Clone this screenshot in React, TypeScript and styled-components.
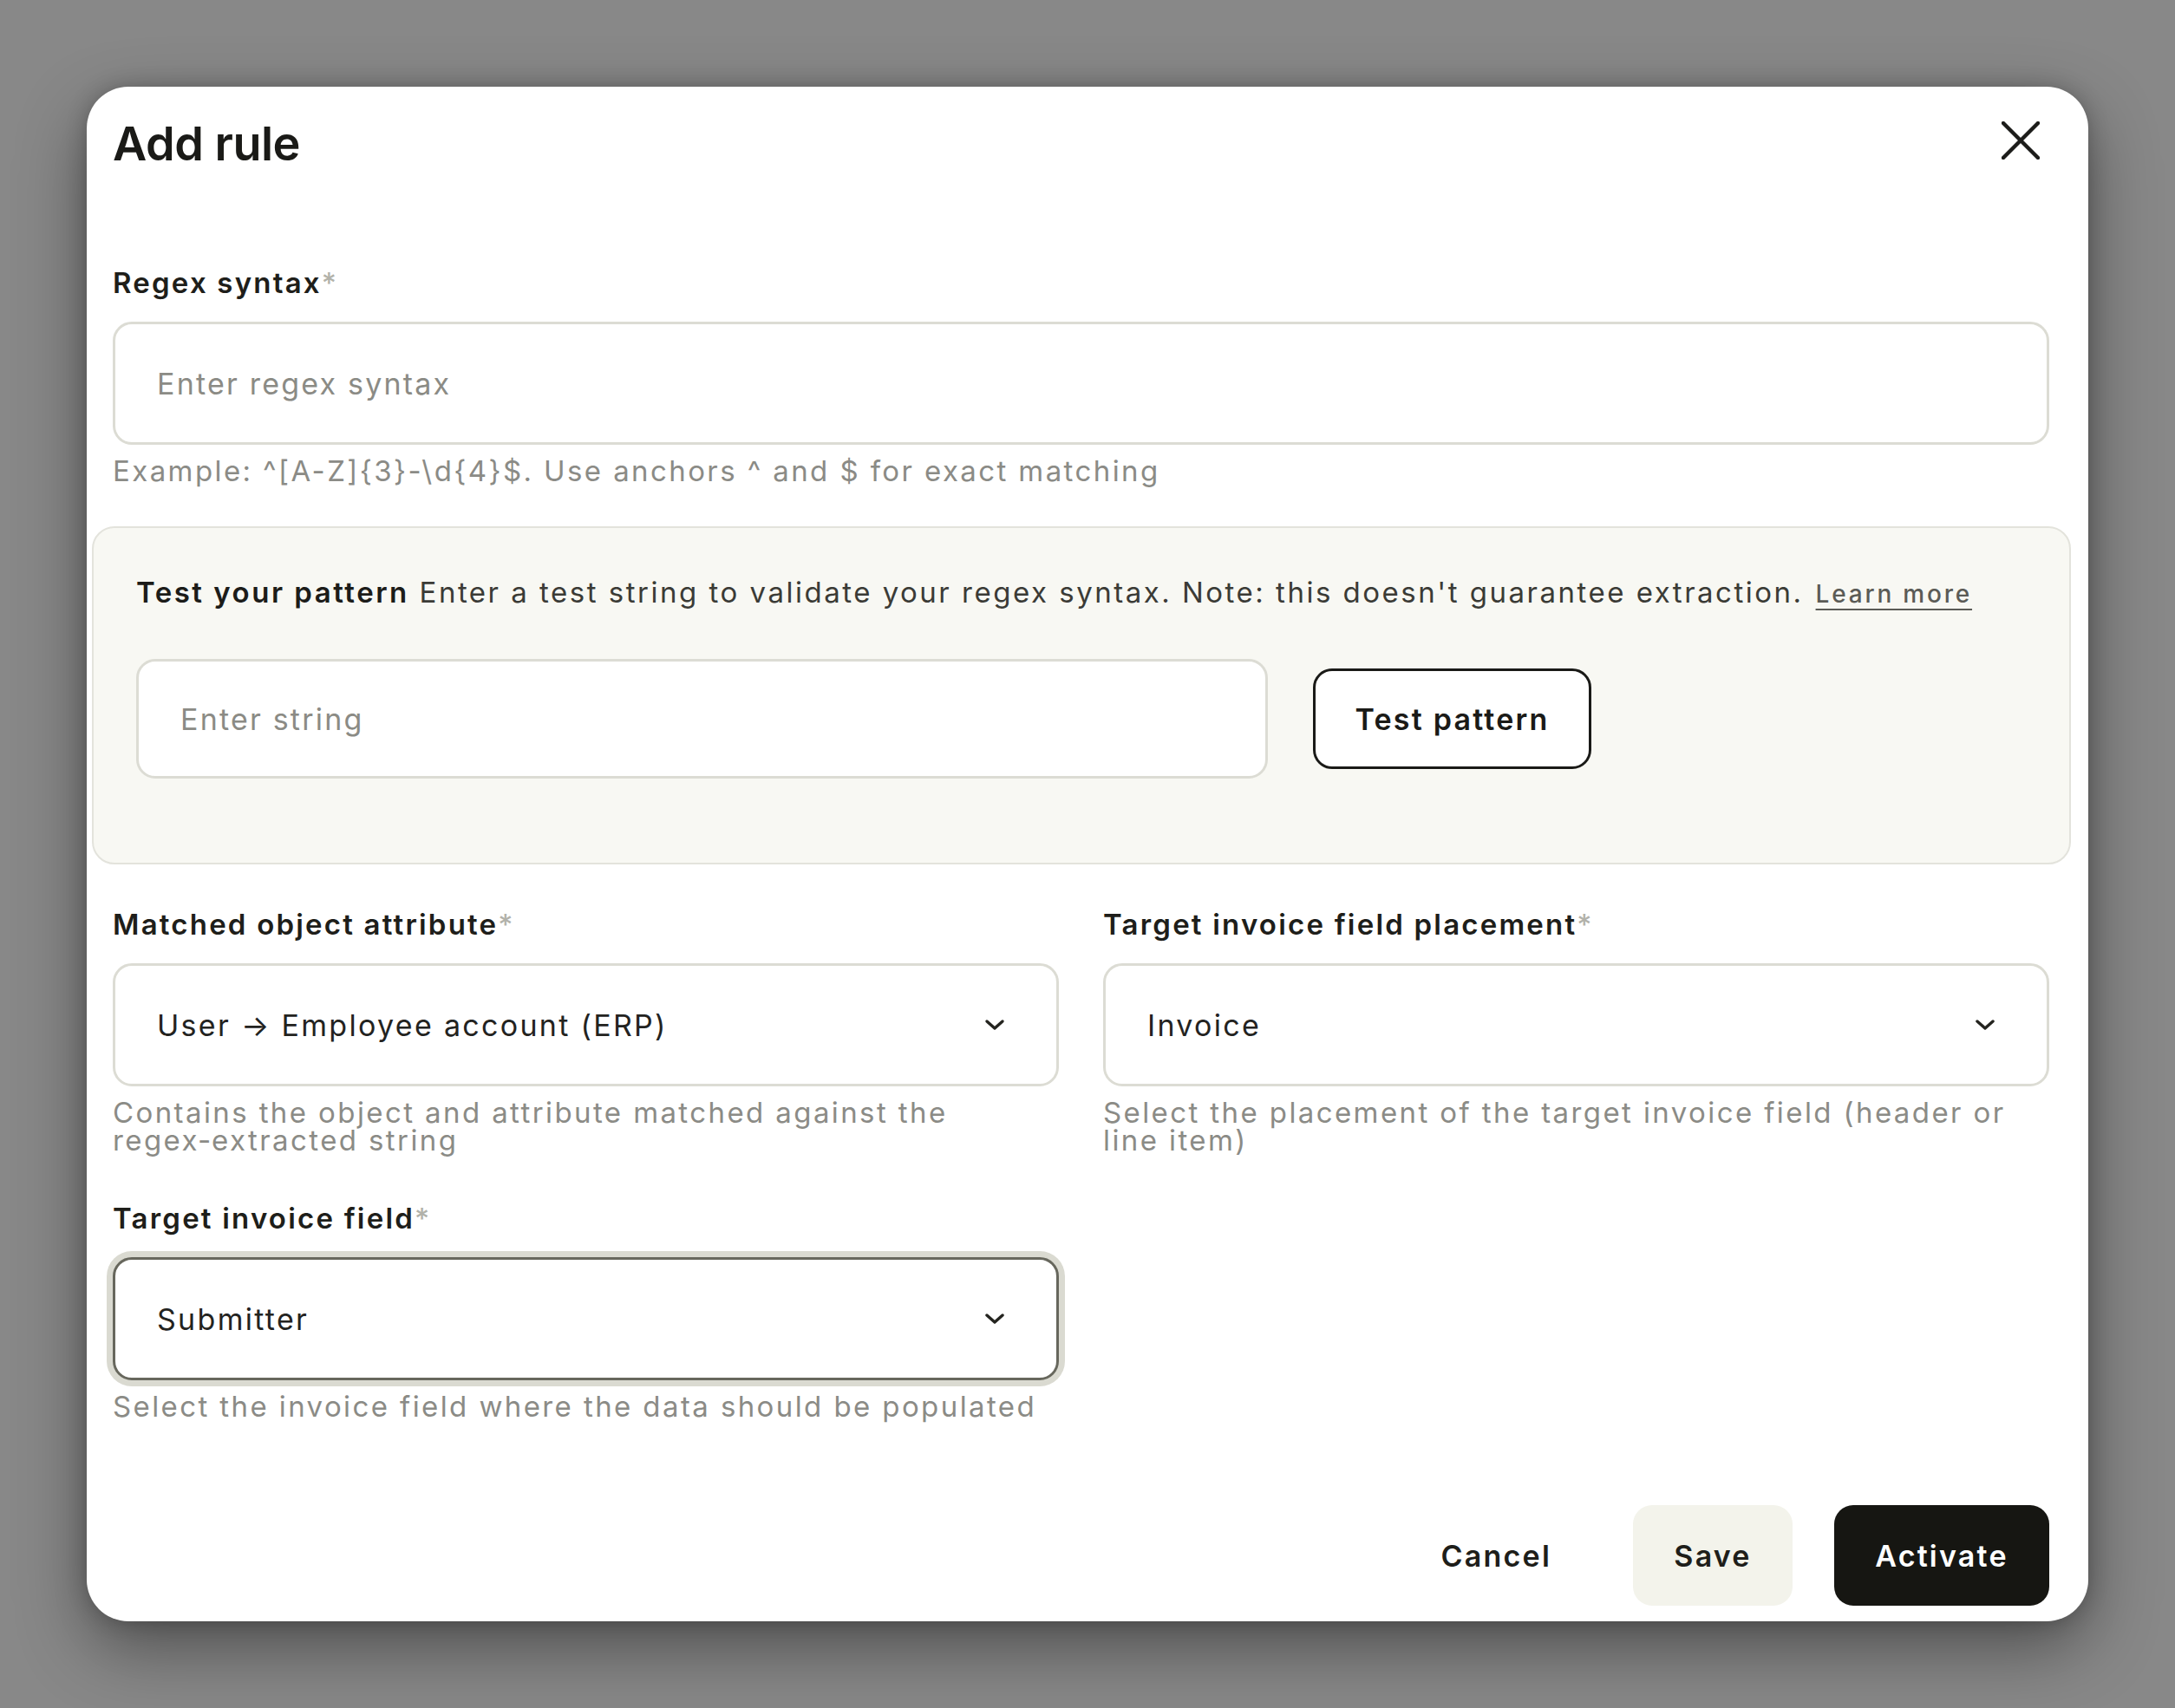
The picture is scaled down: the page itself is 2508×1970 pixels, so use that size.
import React from 'react';
import styled, { createGlobalStyle } from 'styled-components';

const GlobalStyle = createGlobalStyle`
  html, body {
    margin: 0;
    padding: 0;
    background: #888888;
  }
  body {
    font-family: Inter, "Noto Sans", "Liberation Sans", sans-serif;
    color: #1e1e1a;
  }
  * {
    box-sizing: border-box;
  }
`;

type FieldProps = {
  label: string;
  helper: string;
  value?: string;
  placeholder?: string;
  select?: boolean;
  focused?: boolean;
};

function CloseIcon() {
  return (
    <svg width="44" height="44" viewBox="0 0 44 44" fill="none">
      <path d="M2 2 L42 42 M42 2 L2 42" stroke="#1c1c1a" strokeWidth="4.5" strokeLinecap="round" />
    </svg>
  );
}

function Chevron() {
  return (
    <svg width="26" height="15" viewBox="0 0 26 15" fill="none">
      <polyline points="4,3 13,11 22,3" stroke="#24241f" strokeWidth="3.4" strokeLinecap="round" strokeLinejoin="round" />
    </svg>
  );
}

function Field({ label, helper, value, placeholder, select, focused }: FieldProps) {
  return (
    <FieldDiv>
      <Label>
        {label}
        <Required>*</Required>
      </Label>
      <Box $focused={focused}>
        {value ? <Value>{value}</Value> : <Placeholder>{placeholder}</Placeholder>}
        {select && <Chevron />}
      </Box>
      <Helper>{helper}</Helper>
    </FieldDiv>
  );
}

function App() {
  return (
    <Page>
      <GlobalStyle />
      <Modal>
        <Header>
          <Title>Add rule</Title>
          <CloseButton aria-label="Close">
            <CloseIcon />
          </CloseButton>
        </Header>

        <Section>
          <Field
            label="Regex syntax"
            placeholder="Enter regex syntax"
            helper="Example: ^[A-Z]{3}-\d{4}$. Use anchors ^ and $ for exact matching"
          />
        </Section>

        <TestPanel>
          <PanelText>
            <strong>Test your pattern</strong> Enter a test string to validate your regex syntax. Note: this doesn't
            guarantee extraction.
            <LearnMore href="#">Learn more</LearnMore>
          </PanelText>
          <TestRow>
            <TestInput>
              <Placeholder>Enter string</Placeholder>
            </TestInput>
            <OutlineButton>Test pattern</OutlineButton>
          </TestRow>
        </TestPanel>

        <Grid>
          <Field
            label="Matched object attribute"
            value="User → Employee account (ERP)"
            select
            helper={'Contains the object and attribute matched against the regex\u2011extracted string'}
          />
          <Field
            label="Target invoice field placement"
            value="Invoice"
            select
            helper="Select the placement of the target invoice field (header or line item)"
          />
          <Field
            label="Target invoice field"
            value="Submitter"
            select
            focused
            helper="Select the invoice field where the data should be populated"
          />
        </Grid>

        <Footer>
          <GhostButton>Cancel</GhostButton>
          <SoftButton>Save</SoftButton>
          <DarkButton>Activate</DarkButton>
        </Footer>
      </Modal>
    </Page>
  );
}

const Page = styled.div`
  width: 2508px;
  height: 1970px;
  padding: 100px 0 0 100px;
  overflow: hidden;
`;

const Modal = styled.div`
  width: 2308px;
  height: 1770px;
  background: #ffffff;
  border-radius: 48px;
  box-shadow: 0 30px 80px rgba(0, 0, 0, 0.42), 0 0 24px rgba(0, 0, 0, 0.22);
  padding: 34px 45px 18px 30px;
  display: flex;
  flex-direction: column;
`;

const Header = styled.div`
  display: flex;
  justify-content: space-between;
  align-items: flex-start;
  height: 64px;
`;

const Title = styled.h1`
  margin: 0;
  font-size: 54px;
  line-height: 64px;
  font-weight: 600;
  letter-spacing: -0.5px;
  color: #1a1a17;
`;

const CloseButton = styled.button`
  border: none;
  background: none;
  padding: 0;
  margin: 6px 11px 0 0;
  cursor: pointer;
  display: flex;
`;

const Section = styled.div`
  margin-top: 108px;
`;

const FieldDiv = styled.div`
  display: flex;
  flex-direction: column;
`;

const Label = styled.div`
  font-size: 33px;
  line-height: 40px;
  font-weight: 600;
  color: #1e1e1a;
  letter-spacing: 2.2px;
`;

const Required = styled.span`
  color: #b2b2aa;
  font-weight: 500;
`;

const Box = styled.div<{ $focused?: boolean }>`
  margin-top: 25px;
  height: 142px;
  border: 3px solid ${(p) => (p.$focused ? '#67675d' : '#dcdcd4')};
  box-shadow: ${(p) => (p.$focused ? '0 0 0 7px #dadad1' : 'none')};
  border-radius: 22px;
  background: #ffffff;
  padding: 0 58px 0 48px;
  display: flex;
  align-items: center;
  justify-content: space-between;
`;

const Value = styled.span`
  font-size: 34px;
  color: #23231f;
  letter-spacing: 2.3px;
`;

const Placeholder = styled.span`
  font-size: 34px;
  color: #8b8b85;
  letter-spacing: 2.2px;
`;

const Helper = styled.div`
  margin-top: 14px;
  font-size: 33px;
  line-height: 32px;
  color: #8b8b86;
  letter-spacing: 2.4px;
`;

const TestPanel = styled.div`
  margin: 48px -25px 0 -24px;
  background: #f8f8f3;
  border: 2px solid #e3e3dc;
  border-radius: 26px;
  padding: 54px 49px 97px 49px;
`;

const PanelText = styled.div`
  font-size: 33px;
  line-height: 40px;
  color: #3b3b36;
  letter-spacing: 2.5px;

  strong {
    font-weight: 600;
    color: #1c1c19;
  }
`;

const LearnMore = styled.a`
  margin-left: 14px;
  font-size: 28px;
  font-weight: 500;
  color: #5b5b56;
  letter-spacing: 2.8px;
  text-decoration: underline;
  text-decoration-thickness: 2px;
  text-underline-offset: 7px;
`;

const TestRow = styled.div`
  margin-top: 55px;
  display: flex;
  align-items: center;
  gap: 52px;
`;

const TestInput = styled.div`
  width: 1305px;
  height: 138px;
  border: 3px solid #dcdcd4;
  border-radius: 22px;
  background: #ffffff;
  padding: 0 48px;
  display: flex;
  align-items: center;
`;

const BaseButton = styled.button`
  font-family: inherit;
  font-size: 34px;
  font-weight: 600;
  letter-spacing: 2.2px;
  height: 116px;
  border-radius: 22px;
  cursor: pointer;
`;

const OutlineButton = styled(BaseButton)`
  width: 321px;
  border: 3px solid #1a1a17;
  background: #ffffff;
  color: #1a1a17;
`;

const Grid = styled.div`
  margin-top: 49px;
  display: grid;
  grid-template-columns: 1fr 1fr;
  column-gap: 51px;
  row-gap: 54px;
`;

const Footer = styled.div`
  margin-top: auto;
  display: flex;
  justify-content: flex-end;
  gap: 48px;
`;

const GhostButton = styled(BaseButton)`
  border: none;
  background: transparent;
  color: #1e1e1a;
  padding: 0 46px;
`;

const SoftButton = styled(BaseButton)`
  border: none;
  background: #f3f3eb;
  color: #1e1e1a;
  width: 184px;
`;

const DarkButton = styled(BaseButton)`
  border: none;
  background: #161612;
  color: #ffffff;
  width: 248px;
`;

export default App;
